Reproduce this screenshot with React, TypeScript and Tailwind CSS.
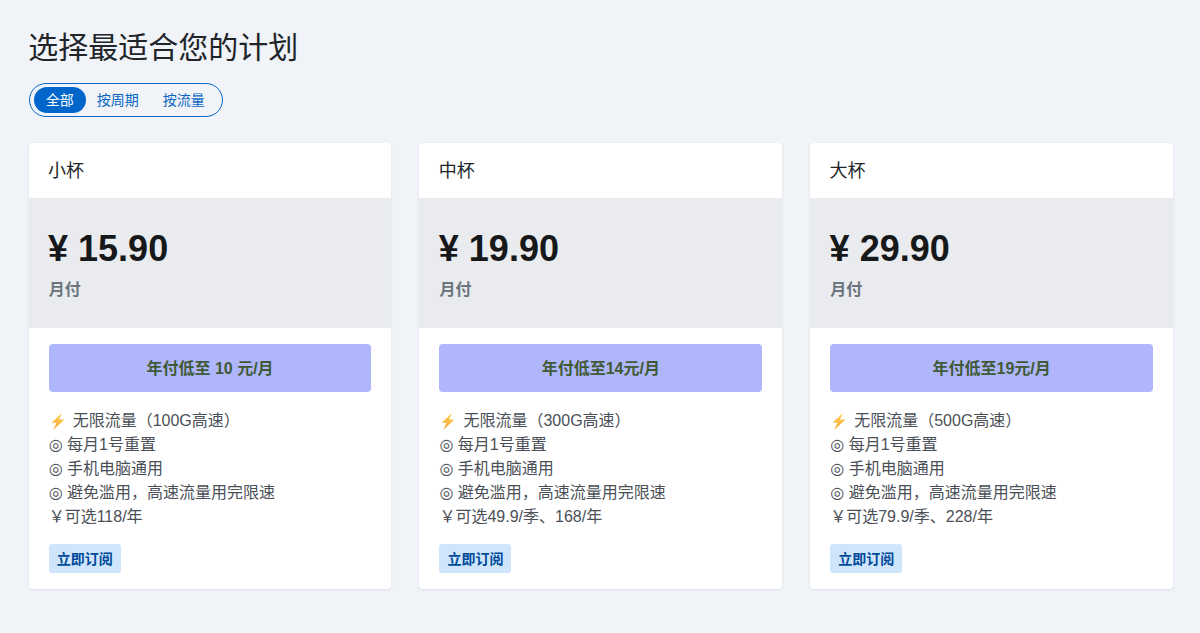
const font = "font-['Liberation_Sans','Noto_Sans_CJK_SC',sans-serif]";

type Plan = {
  name: string;
  price: string;
  notice: string;
  traffic: string;
  extra: string;
};

const plans: Plan[] = [
  { name: "小杯", price: "¥ 15.90", notice: "年付低至 10 元/月", traffic: "无限流量（100G高速）", extra: "￥可选118/年" },
  { name: "中杯", price: "¥ 19.90", notice: "年付低至14元/月", traffic: "无限流量（300G高速）", extra: "￥可选49.9/季、168/年" },
  { name: "大杯", price: "¥ 29.90", notice: "年付低至19元/月", traffic: "无限流量（500G高速）", extra: "￥可选79.9/季、228/年" },
];

function Bullet({ children }: { children: string }) {
  return (
    <div>
      <span className="font-['DejaVu_Sans']">◎</span> {children}
    </div>
  );
}

function PlanCard({ plan }: { plan: Plan }) {
  return (
    <div className="bg-white rounded-[4px] overflow-hidden shadow-[0_1px_3px_rgba(0,0,0,0.08)] h-[446px] flex flex-col">
      <div className="h-[55px] flex items-center pl-[19.4px] pr-5 pt-[2px] text-[18px] text-[#212529]">{plan.name}</div>
      <div className="h-[130px] bg-[#e9ebee] pl-[19.4px] pr-5 pt-[29px]">
        <div className="text-[36px] leading-[44px] font-bold text-[#16181a]">{plan.price}</div>
        <div className="mt-[7px] ml-[0.6px] text-[16px] leading-[24px] font-bold text-[#6c757d]">月付</div>
      </div>
      <div className="px-5 pt-4">
        <div className="h-12 pt-[2px] rounded-[4px] bg-[#b0b6fc] flex items-center justify-center text-[16px] font-bold text-[#3f5a35]">
          {plan.notice}
        </div>
        <div className="mt-[17px] text-[16px] leading-[24px] text-[#4b5057]">
          <div className="flex items-center">
            <svg className="w-[16px] h-[17px] ml-[1px] mr-[7px] shrink-0" viewBox="0 0 16 17">
              <defs>
                <linearGradient id={`bolt-${plan.name}`} x1="0" y1="0" x2="0" y2="1">
                  <stop offset="0" stopColor="#ffd24d" />
                  <stop offset="1" stopColor="#f9a63a" />
                </linearGradient>
              </defs>
              <path d="M12 0 1.5 9.8h5L3.2 17 14.5 6.6H9L12 0Z" fill={`url(#bolt-${plan.name})`} />
            </svg>
            {plan.traffic}
          </div>
          <Bullet>每月1号重置</Bullet>
          <Bullet>手机电脑通用</Bullet>
          <Bullet>避免滥用，高速流量用完限速</Bullet>
          <div>{plan.extra}</div>
        </div>
        <button className="mt-[15px] h-[29px] w-[72px] pt-[2px] rounded-[3px] bg-[#cfe5fc] text-[14px] font-bold text-[#004a99] flex items-center justify-center">
          立即订阅
        </button>
      </div>
    </div>
  );
}

export default function App() {
  return (
    <div className={`${font} min-h-screen bg-[#f0f3f8] pl-[28.67px] pr-[27px] pt-[28px]`}>
      <h1 className="ml-[-0.5px] text-[30px] leading-[40px] font-normal text-[#212529]">选择最适合您的计划</h1>
      <div className="mt-[15px] w-[194px] h-[34px] rounded-full border border-[#0a66c8] flex items-center px-1 text-[14px] text-[#0a66c2]">
        <span className="w-[52px] h-[26px] rounded-full bg-[#0066cc] text-white flex items-center justify-center">全部</span>
        <span className="ml-[11px]">按周期</span>
        <span className="ml-[24px]">按流量</span>
      </div>
      <div className="mt-[26px] grid grid-cols-3 gap-7">
        {plans.map((p) => (
          <PlanCard key={p.name} plan={p} />
        ))}
      </div>
    </div>
  );
}
